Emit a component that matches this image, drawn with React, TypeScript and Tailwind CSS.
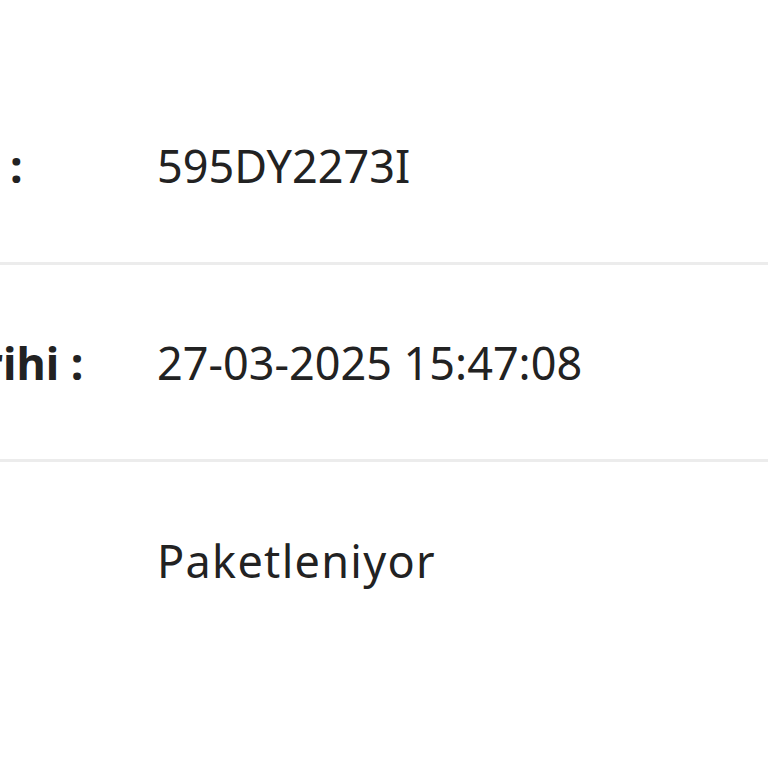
const rows = [
  { label: "Sipariş No :", value: "595DY2273I", tracking: "tracking-normal", line: true },
  { label: "Sipariş Tarihi :", value: "27-03-2025 15:47:08", tracking: "tracking-normal", line: true },
  { label: "Durum :", value: "Paketleniyor", tracking: "tracking-[1.3px]", line: false },
];

export default function App() {
  return (
    <div className="w-[768px] h-[768px] overflow-hidden bg-white text-[#222222] font-['Noto_Sans',sans-serif]">
      <div className="ml-[-228px] w-[996px] pt-[68px]">
        {rows.map((row) => (
          <div
            key={row.label}
            className={`flex items-center h-[197px] ${row.line ? "border-b-[3px] border-[#ececec]" : ""}`}
          >
            <div className="w-[385px] shrink-0 text-[45px] font-bold leading-none whitespace-nowrap">{row.label}</div>
            <div className={`text-[45px] leading-none whitespace-nowrap ${row.tracking}`}>{row.value}</div>
          </div>
        ))}
      </div>
    </div>
  );
}
